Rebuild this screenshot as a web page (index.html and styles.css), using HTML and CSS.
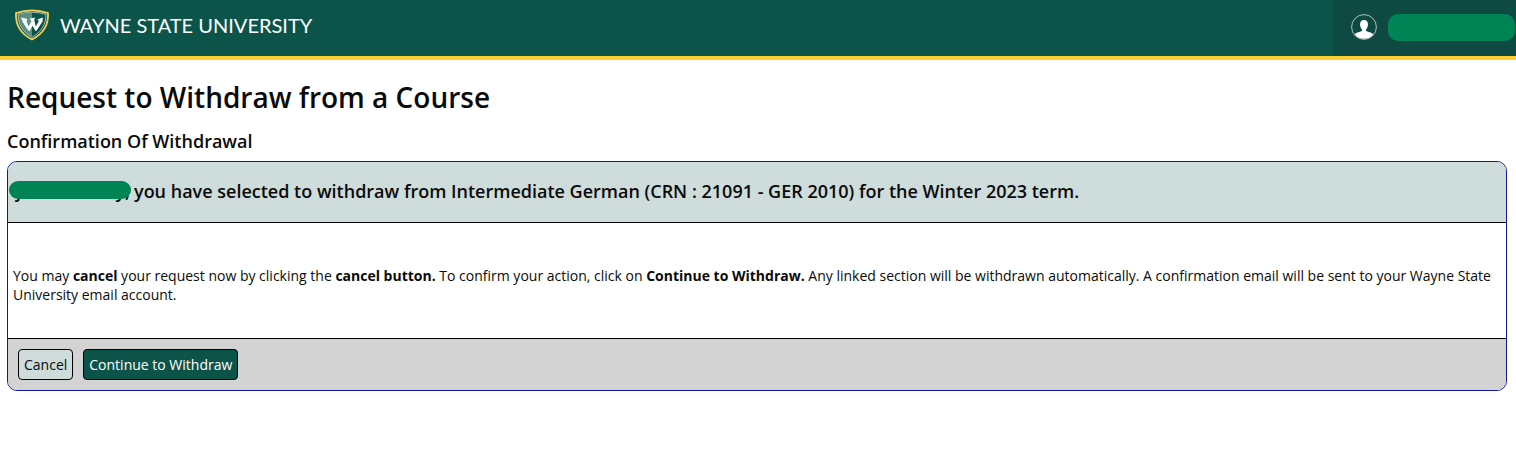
FILE: index.html
```html
<!DOCTYPE html>
<html lang="en">
  <head>
    <meta charset="UTF-8" />
    <meta name="viewport" content="width=device-width, initial-scale=1.0" />
    <title>Request to Withdraw from a Course</title>
    <link rel="stylesheet" href="styles.css">
  </head>
  <body>
    <header class="site-header">
      <div class="brand">
        <svg class="shield" viewBox="0 0 36 32" aria-hidden="true">
          <path d="M18 1.4 Q26 1.4 34 4.1 C34.6 15.5 30 24.5 18 30.4 C6 24.5 1.4 15.5 2 4.1 Q10 1.4 18 1.4Z" fill="#0c5449" stroke="#f3cf55" stroke-width="1.8" />
          <path d="M18 3.8 Q11 3.8 4.4 5.9 C4.6 15.2 8.4 22.8 18 27.8Z" fill="#5d8e84" />
          <path d="M18 3.2 Q25 3.2 32 5.4 C31.8 15.2 27.6 23.2 18 28.2 C8.4 23.2 4.2 15.2 4 5.4 Q11 3.2 18 3.2Z" fill="none" stroke="#dfe8d8" stroke-width="0.7" />
          <path d="M7 8.5 L13.5 10 L12.6 12 L14.5 17.5 L17.4 12.6 L15.8 9.5 L20.8 8.5 L20.3 11.5 L21.8 17.5 L25 12 L23.2 10.5 L29 8.5 L28.5 12.5 L23 21 L21.8 22.3 L18.4 16.8 L15.6 22.3 L13.7 20.8 L9 13.5Z" fill="#fff" />
        </svg>
        <span class="brand-name">WAYNE STATE UNIVERSITY</span>
      </div>
      <div class="account">
        <svg class="avatar" viewBox="0 0 26 26" aria-hidden="true">
          <circle cx="13" cy="13" r="12.4" fill="none" stroke="#d5e0dd" stroke-width="0.8" />
          <path d="M13 6 C16 6 17.2 8 16.9 11 C16.7 13.2 16 14.6 15 15.5 V17 C16.5 18 20.5 18 22.3 20.4 A12 12 0 0 1 3.7 20.4 C5.5 18 9.5 18 11 17 V15.5 C10 14.6 9.3 13.2 9.1 11 C8.8 8 10 6 13 6Z" fill="#fff" />
        </svg>
        <span class="account-name"></span>
      </div>
    </header>

    <main>
      <h1>Request to Withdraw from a Course</h1>
      <h2>Confirmation Of Withdrawal</h2>

      <section class="panel">
        <h3 class="panel-header">
          <span class="student"><span>j</span><span>y,</span></span>
          <span>you have selected to withdraw from Intermediate German (CRN : 21091 - GER 2010) for the Winter 2023 term.</span>
        </h3>
        <p class="panel-body">
          You may <b>cancel</b> your request now by clicking the <b>cancel button.</b>
          To confirm your action, click on <b>Continue to Withdraw.</b>
          Any linked section will be withdrawn automatically. A confirmation email will be sent to your Wayne State University email account.
        </p>
        <div class="panel-footer">
          <button type="button" class="btn">Cancel</button>
          <button type="button" class="btn primary">Continue to Withdraw</button>
        </div>
      </section>
    </main>
  </body>
</html>
```

FILE: styles.css
```css
* {
  box-sizing: border-box;
}

body {
  margin: 0;
  font-family: "Open Sans", sans-serif;
  font-size: 14px;
  color: #0a0a0a;
  background: #fff;
}

.site-header {
  display: flex;
  justify-content: space-between;
  height: 60px;
  background: #0c5449;
  border-bottom: 4px solid #ffcc33;
}

.brand {
  display: flex;
  align-items: center;
  gap: 10px;
  padding: 0 14px 6px;
}

.shield {
  width: 36px;
  height: 32px;
}

.brand-name {
  font-family: Lato, sans-serif;
  font-size: 20px;
  color: #fff;
}

.account {
  display: flex;
  align-items: center;
  gap: 11px;
  padding: 0 1px 2px 17px;
  background: #0e4a41;
}

.avatar {
  width: 26px;
  height: 26px;
}

.account-name {
  width: 127px;
  height: 27px;
  border-radius: 10px;
  background: #008456;
}

main {
  padding: 16px 9px 0 7px;
}

h1,
h2,
h3 {
  margin: 0;
  font-weight: 600;
}

h1 {
  font-size: 28px;
  line-height: 42px;
}

h2 {
  margin: 10px 0 7px;
  font-size: 18px;
  line-height: 26px;
}

.panel {
  overflow: hidden;
  border: 1px solid #1414a0;
  border-radius: 10px;
}

.panel-header {
  display: flex;
  align-items: center;
  gap: 4px;
  padding: 15px 1px 17px;
  font-size: 18px;
  line-height: 28px;
  background: #cedcdb;
  border-bottom: 1px solid #000;
}

.student {
  position: relative;
  display: flex;
  justify-content: space-between;
  width: 121px;
  padding-left: 7px;
}

/* covers the student's name */
.student::after {
  content: "";
  position: absolute;
  top: 4px;
  left: 0;
  width: 122px;
  height: 18px;
  border-radius: 9px;
  background: #008456;
}

.panel-body {
  margin: 0;
  padding: 43px 5px 34px;
  line-height: 19px;
}

.panel-footer {
  display: flex;
  gap: 10px;
  padding: 10px;
  background: #d3d3d3;
  border-top: 1px solid #000;
}

.btn {
  padding: 5px;
  font-family: inherit;
  font-size: 14px;
  line-height: 19px;
  color: #0a0a0a;
  background: #cedcdb;
  border: 1px solid #000;
  border-radius: 4px;
}

.btn.primary {
  color: #fff;
  background: #0c5449;
}
```
